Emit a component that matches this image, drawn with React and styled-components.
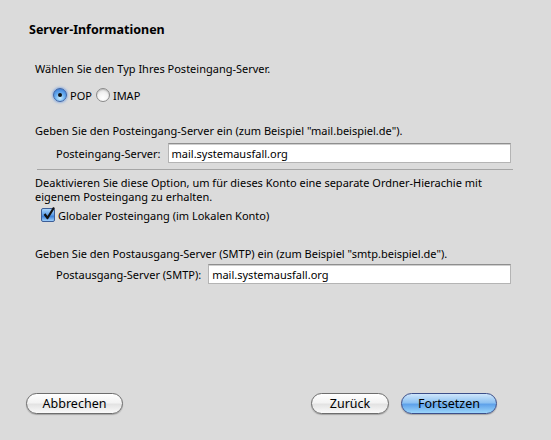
import React from "react";
import styled, { createGlobalStyle } from "styled-components";

const Global = createGlobalStyle`
  html, body { margin: 0; padding: 0; background: #dbdbdb; }
  * { box-sizing: border-box; }
`;

const font = `"Noto Sans", "DejaVu Sans", sans-serif`;

const Page = styled.div`
  width: 551px;
  height: 440px;
  background: #dbdbdb;
  display: flex;
  flex-direction: column;
  padding: 22px 0 26px 0;
  font-family: ${font};
  font-size: 11px;
  color: #000;
`;

const Title = styled.h1`
  margin: 0 0 0 29px;
  font-size: 12.5px;
  font-weight: bold;
  line-height: 16px;
`;

const Body = styled.div`
  display: flex;
  flex-direction: column;
  padding: 0 40px 0 35px;
`;

const Text = styled.p`
  margin: ${(p) => p.$top || 0}px 0 0 0;
  line-height: 14px;
`;

const RadioRow = styled.div`
  display: flex;
  align-items: center;
  height: 16px;
  margin: 11px 0 0 18px;
`;

const RadioLabel = styled.label`
  display: flex;
  align-items: center;
  gap: 3px;
  margin-right: 4px;
`;

const Radio = styled.span`
  width: 14px;
  height: 14px;
  border-radius: 50%;
  display: inline-flex;
  align-items: center;
  justify-content: center;
  border: 1px solid ${(p) => (p.$on ? "#3d64a6" : "#8a8a8a")};
  background: ${(p) =>
    p.$on
      ? "radial-gradient(circle at 50% 75%, #c8ecff 0%, #6aaeef 45%, #2f6fd0 100%)"
      : "radial-gradient(circle at 50% 75%, #ffffff 0%, #f2f2f2 50%, #cfcfcf 100%)"};
  box-shadow: ${(p) => (p.$on ? "0 0 2px 1px rgba(80,140,230,0.5)" : "inset 0 1px 1px rgba(0,0,0,0.15)")};

  &::after {
    content: "";
    width: 4px;
    height: 4px;
    border-radius: 50%;
    background: ${(p) => (p.$on ? "#111" : "transparent")};
  }
`;

const FieldRow = styled.div`
  display: flex;
  align-items: center;
  gap: 7px;
  margin: ${(p) => p.$top}px 0 0 21px;
`;

const Input = styled.div`
  flex: 1;
  height: 20px;
  background: #fff;
  border: 1px solid #b4b4b4;
  border-top-color: #8e8e8e;
  box-shadow: inset 0 1px 0 #cfcfcf;
  padding: 0 3px;
  display: flex;
  align-items: center;
  font-size: 11px;
`;

const Separator = styled.hr`
  margin: 6px -2px 6px 2px;
  border: 0;
  border-top: 1px solid #a5a5a5;
  height: 0;
`;

const CheckRow = styled.label`
  display: flex;
  align-items: center;
  gap: 3px;
  height: 16px;
  margin: 3px 0 0 6px;
`;

const Check = styled.span`
  width: 14px;
  height: 14px;
  border: 1px solid #3d5e97;
  border-radius: 2px;
  background: linear-gradient(#a9d4fb 0%, #5d9de6 50%, #3a7fd8 60%, #9fd0fc 100%);
  display: inline-flex;
  align-items: center;
  justify-content: center;
  position: relative;
  overflow: visible;
`;

const Footer = styled.div`
  margin-top: auto;
  display: flex;
  align-items: center;
  padding: 0 54px 0 26px;
`;

const Spacer = styled.div`
  flex: 1;
`;

const Button = styled.button`
  height: 21px;
  width: ${(p) => p.$w}px;
  margin-left: ${(p) => p.$ml || 0}px;
  border-radius: 11px;
  border: 1px solid ${(p) => (p.$primary ? "#3c4f8a" : "#6d6d6d")};
  font-family: ${font};
  font-size: 12.5px;
  color: #000;
  padding: 0;
  background: ${(p) =>
    p.$primary
      ? "linear-gradient(#cfe6fb 0%, #8ec2f2 45%, #5fa2ea 55%, #9cd6fb 100%)"
      : "linear-gradient(#ffffff 0%, #f3f3f3 45%, #e3e3e3 55%, #fafafa 100%)"};
  box-shadow: 0 1px 1px rgba(0, 0, 0, 0.25);
`;

export default function App() {
  return (
    <Page>
      <Global />
      <Title>Server-Informationen</Title>
      <Body>
        <Text $top={24}>Wählen Sie den Typ Ihres Posteingang-Server.</Text>
        <RadioRow>
          <RadioLabel>
            <Radio $on />
            POP
          </RadioLabel>
          <RadioLabel>
            <Radio />
            IMAP
          </RadioLabel>
        </RadioRow>
        <Text $top={21}>Geben Sie den Posteingang-Server ein (zum Beispiel "mail.beispiel.de").</Text>
        <FieldRow $top={5}>
          <span>Posteingang-Server:</span>
          <Input>mail.systemausfall.org</Input>
        </FieldRow>
        <Separator />
        <Text>
          Deaktivieren Sie diese Option, um für dieses Konto eine separate Ordner-Hierachie mit
          eigenem Posteingang zu erhalten.
        </Text>
        <CheckRow>
          <Check>
            <svg width="14" height="14" viewBox="0 0 14 14" style={{ position: "absolute", left: 0, top: -3 }}>
              <path d="M2.5 8 L5.5 12 L12 1.5" fill="none" stroke="#111" strokeWidth="2.2" strokeLinejoin="round" />
            </svg>
          </Check>
          Globaler Posteingang (im Lokalen Konto)
        </CheckRow>
        <Text $top={24}>Geben Sie den Postausgang-Server (SMTP) ein (zum Beispiel "smtp.beispiel.de").</Text>
        <FieldRow $top={3}>
          <span>Postausgang-Server (SMTP):</span>
          <Input>mail.systemausfall.org</Input>
        </FieldRow>
      </Body>
      <Footer>
        <Button $w={97}>Abbrechen</Button>
        <Spacer />
        <Button $w={78}>Zurück</Button>
        <Button $w={96} $ml={12} $primary>Fortsetzen</Button>
      </Footer>
    </Page>
  );
}
